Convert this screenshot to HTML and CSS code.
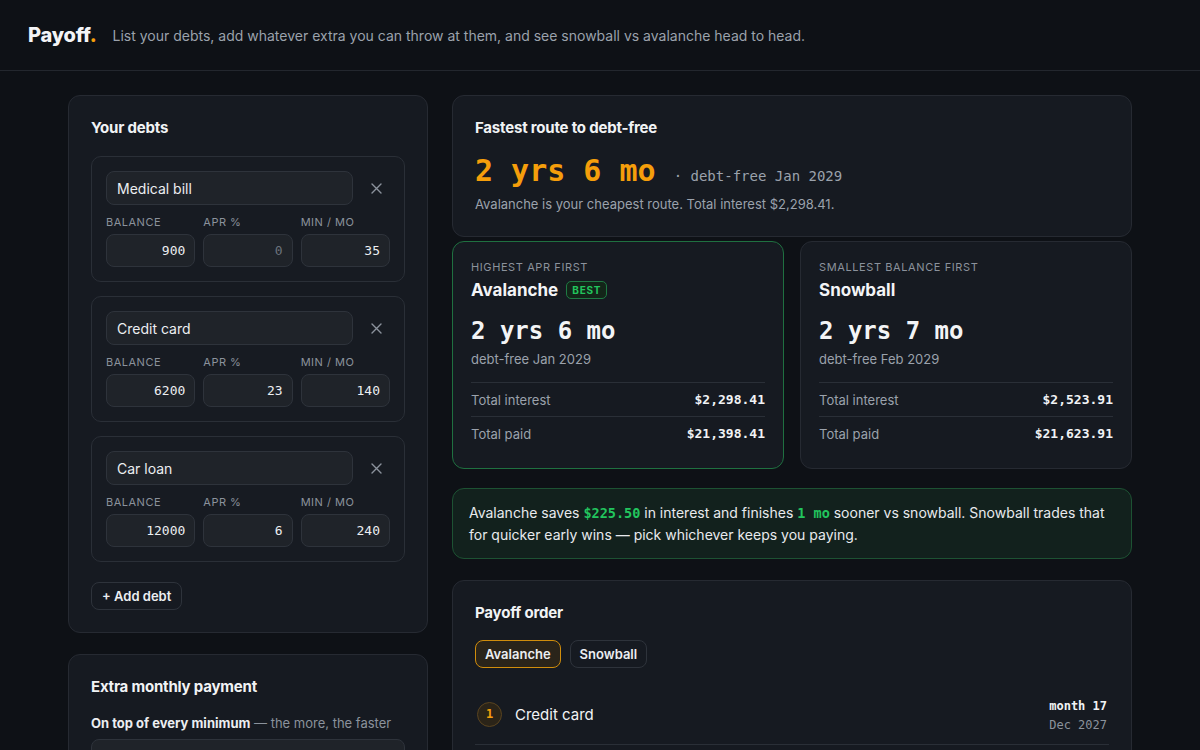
FILE: index.html
```html
<!DOCTYPE html>
<html lang="en">
<head>
<meta charset="utf-8">
<title>Payoff</title>
<link rel="stylesheet" href="styles.css">
</head>
<body>
<header class="header">
  <div class="logo">Payoff<span class="dot">.</span></div>
  <div class="tagline">List your debts, add whatever extra you can throw at them, and see snowball vs avalanche head to head.</div>
</header>

<main class="main">
  <section class="col">
    <div class="card">
      <h2 class="card-title">Your debts</h2>
      <div class="debts">
        <div class="debt">
          <div class="name-row">
            <input class="name-input" type="text" value="Medical bill">
            <button class="remove" aria-label="Remove"><svg width="11" height="11" viewBox="0 0 11 11"><path d="M1 1L10 10M10 1L1 10" stroke="#8b929c" stroke-width="1.4" stroke-linecap="round"/></svg></button>
          </div>
          <div class="fields">
            <label class="field"><span class="lbl">Balance</span><input class="num" type="text" value="900"></label>
            <label class="field"><span class="lbl">APR %</span><input class="num" type="text" placeholder="0"></label>
            <label class="field"><span class="lbl">Min / mo</span><input class="num" type="text" value="35"></label>
          </div>
        </div>
        <div class="debt">
          <div class="name-row">
            <input class="name-input" type="text" value="Credit card">
            <button class="remove" aria-label="Remove"><svg width="11" height="11" viewBox="0 0 11 11"><path d="M1 1L10 10M10 1L1 10" stroke="#8b929c" stroke-width="1.4" stroke-linecap="round"/></svg></button>
          </div>
          <div class="fields">
            <label class="field"><span class="lbl">Balance</span><input class="num" type="text" value="6200"></label>
            <label class="field"><span class="lbl">APR %</span><input class="num" type="text" value="23"></label>
            <label class="field"><span class="lbl">Min / mo</span><input class="num" type="text" value="140"></label>
          </div>
        </div>
        <div class="debt">
          <div class="name-row">
            <input class="name-input" type="text" value="Car loan">
            <button class="remove" aria-label="Remove"><svg width="11" height="11" viewBox="0 0 11 11"><path d="M1 1L10 10M10 1L1 10" stroke="#8b929c" stroke-width="1.4" stroke-linecap="round"/></svg></button>
          </div>
          <div class="fields">
            <label class="field"><span class="lbl">Balance</span><input class="num" type="text" value="12000"></label>
            <label class="field"><span class="lbl">APR %</span><input class="num" type="text" value="6"></label>
            <label class="field"><span class="lbl">Min / mo</span><input class="num" type="text" value="240"></label>
          </div>
        </div>
      </div>
      <button class="add-btn">+ Add debt</button>
    </div>

    <div class="card">
      <h2 class="card-title">Extra monthly payment</h2>
      <p class="extra-sub"><strong>On top of every minimum</strong> — the more, the faster</p>
      <input class="extra-input" type="text" value="">
    </div>
  </section>

  <section class="col col-right">
    <div class="card fastest">
      <h2 class="card-title">Fastest route to debt-free</h2>
      <div class="big-row"><span class="big">2 yrs 6 mo</span><span class="big-note">· debt-free Jan 2029</span></div>
      <p class="muted">Avalanche is your cheapest route. Total interest $2,298.41.</p>
    </div>

    <div class="compare">
      <div class="strategy best">
        <div class="kicker">Highest APR first</div>
        <div class="strat-name">Avalanche <span class="badge">BEST</span></div>
        <div class="strat-time">2 yrs 6 mo</div>
        <div class="strat-date">debt-free Jan 2029</div>
        <div class="stat"><span>Total interest</span><b>$2,298.41</b></div>
        <div class="stat"><span>Total paid</span><b>$21,398.41</b></div>
      </div>
      <div class="strategy">
        <div class="kicker">Smallest balance first</div>
        <div class="strat-name">Snowball</div>
        <div class="strat-time">2 yrs 7 mo</div>
        <div class="strat-date">debt-free Feb 2029</div>
        <div class="stat"><span>Total interest</span><b>$2,523.91</b></div>
        <div class="stat"><span>Total paid</span><b>$21,623.91</b></div>
      </div>
    </div>

    <div class="savings">
      Avalanche saves <span class="g">$225.50</span> in interest and finishes <span class="g">1 mo</span> sooner vs snowball. Snowball trades that for quicker early wins — pick whichever keeps you paying.
    </div>

    <div class="card">
      <h2 class="card-title">Payoff order</h2>
      <div class="tabs">
        <button class="tab active">Avalanche</button>
        <button class="tab">Snowball</button>
      </div>
      <div class="order-row">
        <span class="num-badge">1</span>
        <span class="order-name">Credit card</span>
        <span class="order-when"><b>month 17</b><span>Dec 2027</span></span>
      </div>
      <div class="order-row">
        <span class="num-badge">2</span>
        <span class="order-name">Medical bill</span>
        <span class="order-when"><b>month 20</b><span>Mar 2028</span></span>
      </div>
    </div>
  </section>
</main>
</body>
</html>
```

FILE: styles.css
```css
* { box-sizing: border-box; }

html, body {
  margin: 0;
  background: #0e1116;
  color: #e8eaed;
  font-family: Inter, "Noto Sans", "Liberation Sans", sans-serif;
  height: 750px;
  overflow: hidden;
}

.header {
  height: 71px;
  border-bottom: 1px solid #23272e;
  display: flex;
  align-items: center;
  gap: 16px;
  padding: 0 28px;
}

.logo {
  font-size: 20px;
  font-weight: 800;
  letter-spacing: -0.2px;
  color: #f3f4f6;
}
.logo .dot { color: #f59e0b; }

.tagline {
  font-size: 14px;
  color: #9ba2ac;
}

.main {
  width: 1064px;
  margin: 24px auto 0;
  display: grid;
  grid-template-columns: 360px 680px;
  gap: 24px;
  align-items: start;
}

.col {
  display: flex;
  flex-direction: column;
  gap: 21px;
}

.card {
  background: #161a21;
  border: 1px solid #262a32;
  border-radius: 12px;
  padding: 22px;
}

.card-title {
  margin: 0;
  font-size: 15px;
  line-height: 20px;
  font-weight: 700;
  letter-spacing: -0.2px;
  color: #f1f3f5;
}

/* debts */
.debts {
  margin-top: 18px;
  display: flex;
  flex-direction: column;
  gap: 14px;
}

.debt {
  border: 1px solid #2a2f37;
  border-radius: 10px;
  padding: 14px;
  background: #171b22;
}

.name-row {
  display: grid;
  grid-template-columns: 1fr 28px;
  gap: 9px;
  align-items: center;
}

input {
  font: inherit;
  color: inherit;
  outline: none;
}

.name-input {
  height: 34px;
  width: 100%;
  background: #1f2329;
  border: 1px solid #2e333b;
  border-radius: 8px;
  padding: 0 10px;
  font-size: 14px;
  color: #eceef1;
}

.remove {
  width: 28px;
  height: 28px;
  background: none;
  border: 0;
  padding: 0;
  display: flex;
  align-items: center;
  justify-content: center;
}

.fields {
  margin-top: 11px;
  display: grid;
  grid-template-columns: repeat(3, 1fr);
  gap: 8px;
}

.field {
  display: flex;
  flex-direction: column;
  gap: 5px;
}

.lbl {
  font-size: 11px;
  line-height: 13px;
  letter-spacing: 0.5px;
  text-transform: uppercase;
  color: #8b929c;
}

.num {
  height: 33px;
  width: 100%;
  background: #1f2329;
  border: 1px solid #2e333b;
  border-radius: 8px;
  padding: 0 9px;
  text-align: right;
  font-family: "DejaVu Sans Mono", "Liberation Mono", monospace;
  font-size: 13px;
  color: #eceef1;
}
.num::placeholder { color: #6b727c; }

.add-btn {
  margin-top: 20px;
  height: 28px;
  padding: 0 10px;
  background: transparent;
  border: 1px solid #2e333b;
  border-radius: 8px;
  color: #eceef1;
  font-family: inherit;
  font-size: 13px;
  font-weight: 600;
}

.extra-sub {
  margin: 17px 0 7px;
  font-size: 13px;
  line-height: 18px;
  color: #8b929c;
}
.extra-sub strong { color: #eceef1; font-weight: 700; }

.extra-input {
  width: 100%;
  height: 36px;
  background: #1f2329;
  border: 1px solid #2e333b;
  border-radius: 8px;
}

/* right column */
.col-right { gap: 0; }

.fastest { padding-bottom: 23px; margin-bottom: 4px; }

.big-row {
  margin-top: 15px;
  line-height: 36px;
  height: 36px;
}

.big {
  font-family: "DejaVu Sans Mono", "Liberation Mono", monospace;
  font-size: 30px;
  font-weight: 700;
  color: #f59e0b;
}

.big-note {
  margin-left: 18px;
  font-family: "DejaVu Sans Mono", "Liberation Mono", monospace;
  font-size: 14px;
  line-height: 1;
  color: #9ba2ac;
}

.muted {
  margin: 6px 0 0;
  font-size: 13px;
  line-height: 18px;
  color: #9ba2ac;
}

.compare {
  display: grid;
  grid-template-columns: 1fr 1fr;
  gap: 16px;
}

.strategy {
  background: #161a21;
  border: 1px solid #262a32;
  border-radius: 12px;
  padding: 18px;
}
.strategy.best { border-color: #1f7040; }

.kicker {
  font-size: 11px;
  line-height: 14px;
  letter-spacing: 0.6px;
  text-transform: uppercase;
  color: #8b929c;
}

.strat-name {
  margin-top: 4px;
  display: flex;
  align-items: center;
  gap: 8px;
  font-size: 17px;
  line-height: 24px;
  font-weight: 700;
  color: #f3f4f6;
}

.badge {
  font-size: 10px;
  line-height: 16px;
  font-weight: 700;
  letter-spacing: 0.8px;
  color: #22c55e;
  border: 1px solid #1e7a43;
  background: #132519;
  border-radius: 5px;
  padding: 0 5px;
}

.strat-time {
  margin-top: 14px;
  font-family: "DejaVu Sans Mono", "Liberation Mono", monospace;
  font-size: 24px;
  line-height: 30px;
  font-weight: 700;
  color: #f3f4f6;
}

.strat-date {
  margin-top: 4px;
  font-size: 13px;
  line-height: 18px;
  color: #9ba2ac;
  margin-bottom: 14px;
}

.stat {
  height: 34px;
  border-top: 1px solid #2a2f37;
  display: flex;
  align-items: center;
  justify-content: space-between;
  font-size: 13px;
  color: #9ba2ac;
}
.stat b {
  font-family: "DejaVu Sans Mono", "Liberation Mono", monospace;
  font-size: 13px;
  font-weight: 700;
  color: #f1f3f5;
}

.savings {
  margin: 19px 0 21px;
  background: #12211d;
  border: 1px solid #1d5233;
  border-radius: 12px;
  padding: 13px 16px 12px;
  font-size: 14px;
  line-height: 22px;
  color: #e8eaed;
}
.savings .g {
  font-family: "DejaVu Sans Mono", "Liberation Mono", monospace;
  font-size: 13.5px;
  line-height: 1;
  font-weight: 700;
  color: #22c55e;
}

.tabs {
  margin-top: 17px;
  display: flex;
  gap: 9px;
}

.tab {
  height: 28px;
  padding: 0 9px;
  border: 1px solid #2e333b;
  border-radius: 8px;
  background: transparent;
  color: #eceef1;
  font-family: inherit;
  font-size: 13px;
  font-weight: 600;
}
.tab.active {
  border-color: #d08d0c;
  background: #2a241a;
}

.order-row {
  margin-top: 14px;
  display: flex;
  align-items: center;
  gap: 13px;
  padding: 11px 2px 9px;
  border-bottom: 1px solid #2a2f37;
}
.order-row + .order-row { margin-top: 0; }

.num-badge {
  width: 25px;
  height: 25px;
  border-radius: 50%;
  background: #2b2418;
  border: 1px solid #5a4420;
  color: #f59e0b;
  font-family: "DejaVu Sans Mono", "Liberation Mono", monospace;
  font-size: 12px;
  font-weight: 700;
  display: flex;
  align-items: center;
  justify-content: center;
}

.order-name {
  flex: 1;
  font-size: 15px;
  color: #f1f3f5;
}

.order-when {
  margin-top: 4px;
  display: flex;
  flex-direction: column;
  align-items: flex-end;
  font-family: "DejaVu Sans Mono", "Liberation Mono", monospace;
  font-size: 12px;
  line-height: 19px;
}
.order-when b { color: #f1f3f5; font-weight: 700; }
.order-when span { color: #8b929c; }
```
